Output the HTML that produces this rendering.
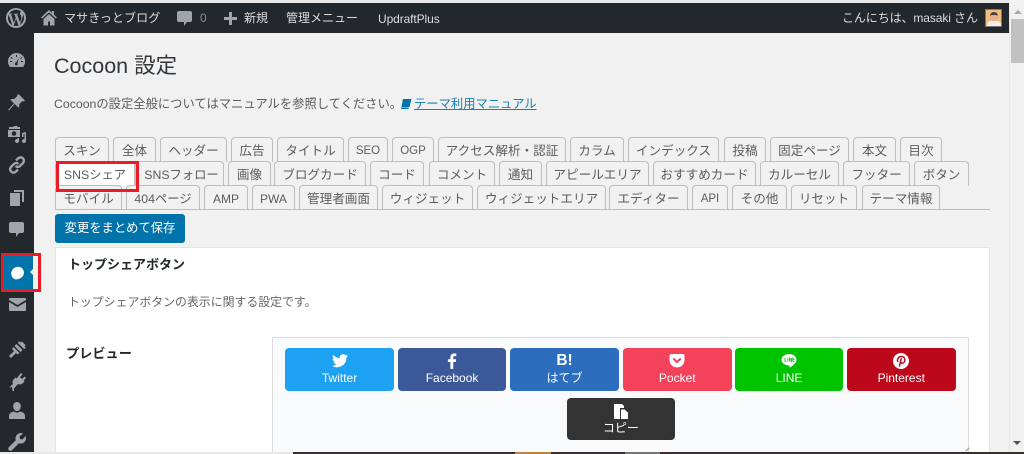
<!DOCTYPE html>
<html lang="ja"><head><meta charset="utf-8"><title>Cocoon 設定</title>
<style>
*{box-sizing:border-box}
html,body{margin:0;padding:0;width:1024px;height:454px;overflow:hidden;background:#f1f1f1;font-family:"Liberation Sans","Noto Sans CJK JP",sans-serif}
.a{position:absolute;white-space:nowrap}
.t{position:absolute;height:25px;border:1px solid #bdbdbd;border-bottom:0;border-radius:4px 4px 0 0;background:#f1f1f1;color:#5c5c5c;font-size:12.600px;line-height:26.500px;text-align:center;white-space:nowrap}
.bar{color:#ddd;font-size:12px;line-height:16px}
.b{position:absolute;width:108.500px;height:43px;border-radius:4px;color:#fff;text-align:center;font-size:12px}
.b span{position:absolute;left:0;right:0;top:23px;line-height:15px}
.b svg{position:absolute;left:50%;transform:translateX(-50%);top:4px}
svg.i{position:absolute;fill:#a0a5aa}
</style></head><body>
<div class="a" style="left:0;top:0;width:1009px;height:3px;background:#e8e8e8"></div>
<div class="a" style="left:0;top:3px;width:1009px;height:30px;background:#23282d"></div>
<div class="a" style="left:0;top:33px;width:33.500px;height:419px;background:#23282d"></div>

<svg class="i" style="left:6px;top:8px" width="20" height="20" viewBox="0 0 20 20"><path fill-rule="evenodd" d="M10 0a10 10 0 1 0 0 20 10 10 0 0 0 0-20zM2 10c0-1.200.3-2.300.7-3.300l3.800 10.500A8 8 0 0 1 2 10zm8 8c-.8 0-1.500-.1-2.300-.3l2.400-7 2.500 6.800A8 8 0 0 1 10 18zm1.100-11.800l2.900 8.600.8-2.700c.3-1.100.6-1.900.6-2.600 0-1-.4-1.700-.7-2.200-.4-.7-.8-1.300-.8-2 0-.8.600-1.500 1.400-1.500h.1A8 8 0 0 0 3.300 5.600h.5c.8 0 2.100-.1 2.100-.1.4 0 .5.600 0 .7 0 0-.4 0-.9.100l2.900 8.700 1.800-5.300-1.200-3.400c-.4 0-.8-.1-.8-.1-.4 0-.4-.7 0-.6 0 0 1.300.1 2.100.1s2.100-.1 2.100-.1c.4 0 .5.600 0 .7 0 0-.4 0-.9-.1zm5.800-.4A8 8 0 0 1 18 10c0 2.900-1.600 5.500-4 6.900l2.400-7c.5-1.100.6-2 .6-2.800 0-.4 0-.9-.1-1.300z"/></svg>
<svg class="i" style="left:41px;top:9px" width="16" height="17" viewBox="0 0 16 17"><path d="M8 1L0 8.500l1.200 1L8 3.400l6.800 6.100 1.200-1L13 5.700V2h-2v1.900zM8 5L2.500 10v6.500H7v-4h2v4h4.500V10z"/></svg>
<div class="a bar" style="left:64px;top:10px;letter-spacing:.1px">マサきっとブログ</div>
<svg class="i" style="left:177px;top:11px" width="15" height="15" viewBox="0 0 15 15"><path d="M2 0h11a2 2 0 0 1 2 2v7a2 2 0 0 1-2 2h-3l-3 4v-4H2a2 2 0 0 1-2-2V2a2 2 0 0 1 2-2z"/></svg>
<div class="a bar" style="left:200px;top:10px;color:#8a8f94">0</div>
<svg class="i" style="left:224px;top:12px" width="13" height="13" viewBox="0 0 13 13"><path d="M5 0h3v5h5v3H8v5H5V8H0V5h5z"/></svg>
<div class="a bar" style="left:244px;top:10px">新規</div>
<div class="a bar" style="left:286px;top:10px">管理メニュー</div>
<div class="a bar" style="left:378px;top:11px;letter-spacing:-.1px">UpdraftPlus</div>
<div class="a bar" style="left:842px;top:10px;letter-spacing:-.1px">こんにちは、masaki さん</div>
<div class="a" style="left:985px;top:9px;width:17px;height:18px;background:#f2bd7c;border:1px solid #777;overflow:hidden">
<div class="a" style="left:4px;top:2px;width:8px;height:9px;border-radius:4px;background:#e8b090;border-top:3px solid #444"></div>
<div class="a" style="left:1px;top:11px;width:14px;height:6px;border-radius:4px 4px 0 0;background:#eee"></div></div>

<svg class="i" style="left:8px;top:53px" width="17" height="14" viewBox="0 0 17 14"><path fill-rule="evenodd" d="M8.500 0A8.500 8.500 0 0 0 0 8.500c0 2 .7 3.900 1.900 5.500h13.200A8.500 8.500 0 0 0 8.500 0zM8 2h1v2H8zM3.500 4l1.400 1.400-.7.700-1.400-1.400zm10 0l.7.700-1.400 1.400-.7-.7zM2 8h2v1H2zm11 0h2v1h-2zm-2-3l-1.500 5a1.500 1.500 0 1 1-1.300-.6z"/></svg>
<svg class="i" style="left:8px;top:94px" width="17" height="17" viewBox="0 0 17 17"><path d="M10.500 0L17 6.500l-1.200 1-1.300-.5-3.300 3.200c.4 1.500.1 2.700-.7 3.600L6.800 10 1 16.500 0 16l6-6.500-3.600-3.700c.9-.8 2.200-1.100 3.700-.7L9.300 2l-.1-.7z"/></svg>
<svg class="i" style="left:8px;top:126px" width="18" height="18" viewBox="0 0 18 18"><path fill-rule="evenodd" d="M1 1h4l1-1h3l1 1h2v2H1zM0 4h12v7H0zm6 1.200a2.300 2.300 0 1 0 0 4.600 2.300 2.300 0 0 0 0-4.600zM9 12h2v3a2 2 0 1 1-1.500-1.900V12zM14 7l4-1v9a2 2 0 1 1-1.500-1.900V8l-1 .3V11h-1.500z"/></svg>
<svg class="i" style="left:8px;top:156px;fill:none;stroke:#a0a5aa;stroke-width:2.400" width="18" height="18" viewBox="0 0 18 18"><path d="M8 4.500l2-2a3.200 3.200 0 0 1 5 4.500l-3 3a3.200 3.200 0 0 1-4.500 0M10 13.500l-2 2a3.200 3.200 0 0 1-5-4.500l3-3a3.200 3.200 0 0 1 4.500 0"/></svg>
<svg class="i" style="left:10px;top:190px" width="14" height="16" viewBox="0 0 14 16"><path d="M4 0h10v12h-2V2H4zM0 3h10v13H0z"/></svg>
<svg class="i" style="left:9px;top:222px" width="15" height="15" viewBox="0 0 15 15"><path d="M2 0h11a2 2 0 0 1 2 2v7a2 2 0 0 1-2 2h-3l-3 4v-4H2a2 2 0 0 1-2-2V2a2 2 0 0 1 2-2z"/></svg>

<div class="a" style="left:4px;top:256px;width:29px;height:33px;background:#0073aa"></div>
<div class="a" style="left:11px;top:267px;width:13px;height:12px;background:#fff;border-radius:60% 50% 55% 45%;transform:rotate(-20deg)"></div>
<div class="a" style="left:30px;top:268px;width:0;height:0;border:4.500px solid transparent;border-right:4px solid #f1f1f1;border-left:0"></div>
<div class="a" style="left:33px;top:253px;width:4px;height:39px;background:#f1f1f1"></div>
<div class="a" style="left:1px;top:253px;width:40px;height:39px;border:3.500px solid #ed1c24"></div>

<svg class="i" style="left:9px;top:298px" width="17" height="13" viewBox="0 0 17 13"><path d="M1 0h15a1 1 0 0 1 1 1v1L8.500 7 0 2V1a1 1 0 0 1 1-1zM0 4l8.500 5L17 4v8a1 1 0 0 1-1 1H1a1 1 0 0 1-1-1z"/></svg>
<svg class="i" style="left:8px;top:341px" width="18" height="17" viewBox="0 0 18 17"><path d="M11 0l1.500 1.500 1.500-1 3.500 3.500-1 1.500L18 7l-2 1-6-6zM8.500 3l6 6-2 2-6-6zM5.500 6l6 6-2 1.500-1.500-1.500L3 17 1 15l5-5-2-2z"/></svg>
<svg class="i" style="left:9px;top:373px" width="17" height="18" viewBox="0 0 17 18"><path d="M12 0l1.500 1.500L11 4l2 2 2.500-2.500L17 5l-2.500 2.500 1 1-1.500 1.500c-1.500 1.500-3.500 2-5 1L5 15.500V18H3.500L3 14l-3 .5 4-3.500c-1-1.500-.5-3.500 1-5l1.500-1.500 1 1z"/></svg>
<svg class="i" style="left:9px;top:402px" width="16" height="17" viewBox="0 0 16 17"><path d="M8 0c2.300 0 3.800 1.800 3.800 4.200S10.300 9 8 9 4.200 6.600 4.200 4.200 5.700 0 8 0zM5 9.500C6 10.300 7 10.600 8 10.600s2-.3 3-1.100c3 .5 5 2 5 4.500V17H0v-3c0-2.500 2-4 5-4.500z"/></svg>
<svg class="i" style="left:8px;top:433px" width="18" height="18" viewBox="0 0 18 18"><path d="M12.500 0c1 0 1.800.2 2.500.6L11.500 3.500l.5 2.500 2.500.5L17.500 3c.4.700.5 1.500.5 2.300a5.400 5.400 0 0 1-7.200 5L4 17.200c-.9.900-2.200 1-3.100.1s-.9-2.300 0-3.200l6.900-6.800A5.400 5.400 0 0 1 12.500 0z"/></svg>

<div class="a" style="left:54px;top:52px;font-size:21.500px;line-height:28px;color:#32373c">Cocoon 設定</div>
<div class="a" style="left:54px;top:96px;font-size:12.300px;line-height:17px;color:#5a5a5a">Cocoonの設定全般についてはマニュアルを参照してください。</div>
<svg class="a" style="left:400px;top:98px" width="12" height="12" viewBox="0 0 12 12"><path fill="#0073aa" d="M3 1h8.500L9.500 9H1.500zM1.300 9.500h7.500l-.3 1.500H1z"/></svg>
<div class="a" style="left:414px;top:96px;font-size:12.300px;line-height:17px;color:#1a82b5;text-decoration:underline">テーマ利用マニュアル</div>

<div class="t" style="left:55px;top:137px;width:54px">スキン</div>
<div class="t" style="left:113px;top:137px;width:43px">全体</div>
<div class="t" style="left:160px;top:137px;width:67px">ヘッダー</div>
<div class="t" style="left:231px;top:137px;width:42px">広告</div>
<div class="t" style="left:277px;top:137px;width:67px">タイトル</div>
<div class="t" style="left:348px;top:137px;width:40px;font-size:11.500px">SEO</div>
<div class="t" style="left:392px;top:137px;width:42px;font-size:11.500px">OGP</div>
<div class="t" style="left:438px;top:137px;width:128px">アクセス解析・認証</div>
<div class="t" style="left:570px;top:137px;width:54px">カラム</div>
<div class="t" style="left:628px;top:137px;width:91px">インデックス</div>
<div class="t" style="left:724px;top:137px;width:42px">投稿</div>
<div class="t" style="left:770px;top:137px;width:79px">固定ページ</div>
<div class="t" style="left:853px;top:137px;width:43px">本文</div>
<div class="t" style="left:900px;top:137px;width:42px">目次</div>

<div class="t" style="left:55px;top:161px;width:80px;background:#fff;font-size:12.300px">SNSシェア</div>
<div class="t" style="left:135px;top:161px;width:89px;font-size:12.300px;padding-left:4px">SNSフォロー</div>
<div class="t" style="left:228px;top:161px;width:43px">画像</div>
<div class="t" style="left:274px;top:161px;width:92px">ブログカード</div>
<div class="t" style="left:370px;top:161px;width:54px">コード</div>
<div class="t" style="left:429px;top:161px;width:66px">コメント</div>
<div class="t" style="left:499px;top:161px;width:43px">通知</div>
<div class="t" style="left:546px;top:161px;width:103px">アピールエリア</div>
<div class="t" style="left:653px;top:161px;width:103px">おすすめカード</div>
<div class="t" style="left:760px;top:161px;width:79px">カルーセル</div>
<div class="t" style="left:843px;top:161px;width:67px">フッター</div>
<div class="t" style="left:914px;top:161px;width:55px">ボタン</div>

<div class="t" style="left:55px;top:185px;width:67px">モバイル</div>
<div class="t" style="left:126px;top:185px;width:74px;font-size:12.300px">404ページ</div>
<div class="t" style="left:204px;top:185px;width:44px;font-size:12px">AMP</div>
<div class="t" style="left:252px;top:185px;width:43px;font-size:12px">PWA</div>
<div class="t" style="left:299px;top:185px;width:79px">管理者画面</div>
<div class="t" style="left:382px;top:185px;width:91px">ウィジェット</div>
<div class="t" style="left:477px;top:185px;width:129px">ウィジェットエリア</div>
<div class="t" style="left:609px;top:185px;width:79px">エディター</div>
<div class="t" style="left:692px;top:185px;width:36px;font-size:11.500px">API</div>
<div class="t" style="left:732px;top:185px;width:55px">その他</div>
<div class="t" style="left:791px;top:185px;width:66px">リセット</div>
<div class="t" style="left:862px;top:185px;width:78px">テーマ情報</div>
<div class="a" style="left:55px;top:209px;width:935px;height:1px;background:#bbb"></div>

<div class="a" style="left:56px;top:161px;width:83px;height:31px;border:3.500px solid #ed1c24"></div>

<div class="a" style="left:55px;top:214px;width:130px;height:29px;background:#0073aa;border-radius:3px;color:#fff;font-size:12.300px;line-height:29px;text-align:center">変更をまとめて保存</div>

<div class="a" style="left:55px;top:247px;width:935px;height:205px;background:#fff;border:1px solid #e5e5e5;border-bottom:0"></div>
<div class="a" style="left:68px;top:256px;font-size:13px;line-height:17px;font-weight:bold;color:#23282d">トップシェアボタン</div>
<div class="a" style="left:68px;top:294px;font-size:11.900px;line-height:17px;color:#666">トップシェアボタンの表示に関する設定です。</div>
<div class="a" style="left:66px;top:345px;font-size:13.200px;line-height:17px;font-weight:bold;color:#23282d">プレビュー</div>

<div class="a" style="left:272px;top:337px;width:697px;height:115px;background:#f9fafc;border:1.500px solid #ddd;border-bottom:0"></div>

<div class="b" style="left:285.300px;top:348px;background:#1da1f2"><svg width="16" height="14" viewBox="0 0 16 14" style="top:6px"><path fill="#fff" d="M16 1.700c-.6.300-1.200.4-1.900.5.700-.4 1.200-1 1.400-1.800-.6.400-1.300.6-2.100.8A3.300 3.300 0 0 0 7.800 4.200C5.100 4.100 2.700 2.800 1.100.8.300 2.300.7 4.200 2.100 5.200c-.5 0-1-.2-1.500-.4 0 1.600 1.100 3 2.600 3.300-.5.100-1 .1-1.500 0 .4 1.300 1.600 2.200 3.100 2.300A6.600 6.600 0 0 1 0 11.700 9.300 9.300 0 0 0 14.400 3.400c.6-.4 1.200-1 1.600-1.700z"/></svg><span>Twitter</span></div>
<div class="b" style="left:397.800px;top:348px;background:#3b5998"><svg width="9" height="16" viewBox="0 0 9 16" style="top:5px"><path fill="#fff" d="M5.800 16V9h2.500L8.700 6.200H5.800V4.500c0-.8.200-1.400 1.400-1.400H8.800V.6C8.500.6 7.600.5 6.600.5 4.400.5 2.900 1.800 2.900 4.200v2H.4V9h2.500v7z"/></svg><span>Facebook</span></div>
<div class="b" style="left:510.300px;top:348px;background:#2c6ebd"><div class="a" style="left:0;right:0;top:4px;font-size:15.500px;line-height:18px;font-weight:bold;text-align:center">B!</div><span>はてブ</span></div>
<div class="b" style="left:623px;top:348px;background:#f3425a"><svg width="15" height="14" viewBox="0 0 15 14" style="top:6px"><path fill="#fff" d="M1.500 0h12A1.500 1.500 0 0 1 15 1.500V6A7.500 7.500 0 0 1 0 6V1.500A1.500 1.500 0 0 1 1.500 0z"/><path fill="none" stroke="#f3425a" stroke-width="2" stroke-linecap="round" stroke-linejoin="round" d="M4.300 5l3.200 3 3.200-3"/></svg><span>Pocket</span></div>
<div class="b" style="left:735.300px;top:348px;background:#00c300;width:107.500px"><svg width="15" height="14" viewBox="0 0 15 14" style="top:6px"><path fill="#fff" d="M7.500 0C11.600 0 15 2.500 15 5.800c0 2.800-3.500 6-7 8 .2-1 .3-2 0-2.200C3.500 11.600 0 9 0 5.800 0 2.500 3.400 0 7.500 0z"/><path fill="none" stroke="#00c300" d="M3.500 4v3.500h1.500M6.300 4v3.500M8 7.500V4l2 3.500V4M13 4h-1.700v3.500H13M11.300 5.700H13" stroke-width=".8"/></svg><span>LINE</span></div>
<div class="b" style="left:847px;top:348px;background:#bd081c"><svg width="16" height="16" viewBox="0 0 16 16" style="top:5px"><circle cx="8" cy="8" r="8" fill="#fff"/><path fill="none" stroke="#bd081c" stroke-width="1.500" stroke-linecap="round" d="M4.800 8.500C3.800 6 5.500 3.500 8.300 3.500c2.300 0 3.500 1.500 3.500 3.200 0 2-1 3.500-2.600 3.500-.8 0-1.500-.5-1.500-1.200M8.200 5.800L6.500 13"/></svg><span>Pinterest</span></div>
<div class="b" style="left:566.700px;top:397.700px;background:#333;height:42px"><svg width="16" height="16" viewBox="0 0 16 16" style="top:6px"><path fill="#fff" d="M1 0h8l2 2v2H7v11H1z"/><path fill="#fff" stroke="#333" d="M7.500 5H12l3.500 3.500V15.500h-8z"/></svg><span>コピー</span></div>

<div class="a" style="left:965px;top:449px;width:5px;height:1px;background:#999;transform:rotate(-45deg)"></div>

<div class="a" style="left:1009px;top:0;width:15px;height:454px;background:#f1f1f1;border-left:1px solid #e8e8e8"></div>
<div class="a" style="left:1010.500px;top:19px;width:13px;height:44px;background:#c1c1c1"></div>
<div class="a" style="left:1014px;top:10px;width:0;height:0;border:4px solid transparent;border-top:0;border-bottom:4px solid #a8a8a8"></div>
<div class="a" style="left:1013px;top:441px;width:0;height:0;border:4px solid transparent;border-bottom:0;border-top:4px solid #505050"></div>

<div class="a" style="left:0;top:452px;width:1024px;height:2px;background:#e8e8e8"></div>
<div class="a" style="left:293px;top:452px;width:731px;height:2px;background:#3a2e30"></div>
<div class="a" style="left:515px;top:452px;width:36px;height:2px;background:#c08040"></div>
<div class="a" style="left:625px;top:452px;width:35px;height:2px;background:#777"></div>
</body></html>
